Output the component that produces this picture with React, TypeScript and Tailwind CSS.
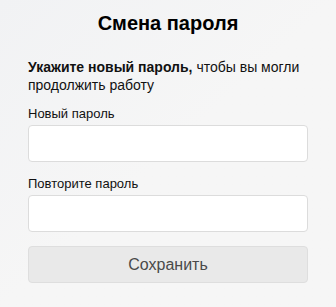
import React from 'react'

const Field: React.FC<{ label: string }> = ({ label }) => (
  <div className="flex flex-col">
    <label className="text-[13px] leading-[16px] text-[#111]">{label}</label>
    <input
      type="password"
      className="mt-[3px] h-[37px] w-full rounded-[4px] border border-[#dcdcdc] bg-white px-3 outline-none"
    />
  </div>
)

export default function App() {
  return (
    <div
      className="min-h-[307px] w-full bg-gradient-to-br from-[#f1f2f4] via-[#f6f6f6] to-[#f6f6f6] px-[28px] pt-[11px]"
      style={{ fontFamily: '"Liberation Sans", Arial, sans-serif' }}
    >
      <h1 className="text-center text-[20px] font-bold leading-[24px] text-black">Смена пароля</h1>

      <p className="mt-[23px] text-[14px] leading-[18px] text-[#111]">
        <b>Укажите новый пароль,</b> <span>чтобы вы могли</span>
        <br />
        <span>продолжить работу</span>
      </p>

      <div className="mt-[12px] flex flex-col gap-[14px]">
        <Field label="Новый пароль" />
        <Field label="Повторите пароль" />
      </div>

      <button
        type="button"
        className="mt-[14px] h-[37px] w-full rounded-[4px] border border-[#dedede] bg-[#e9e9e9] text-[16px] text-[#4a4a4a]"
      >
        Сохранить
      </button>
    </div>
  )
}
